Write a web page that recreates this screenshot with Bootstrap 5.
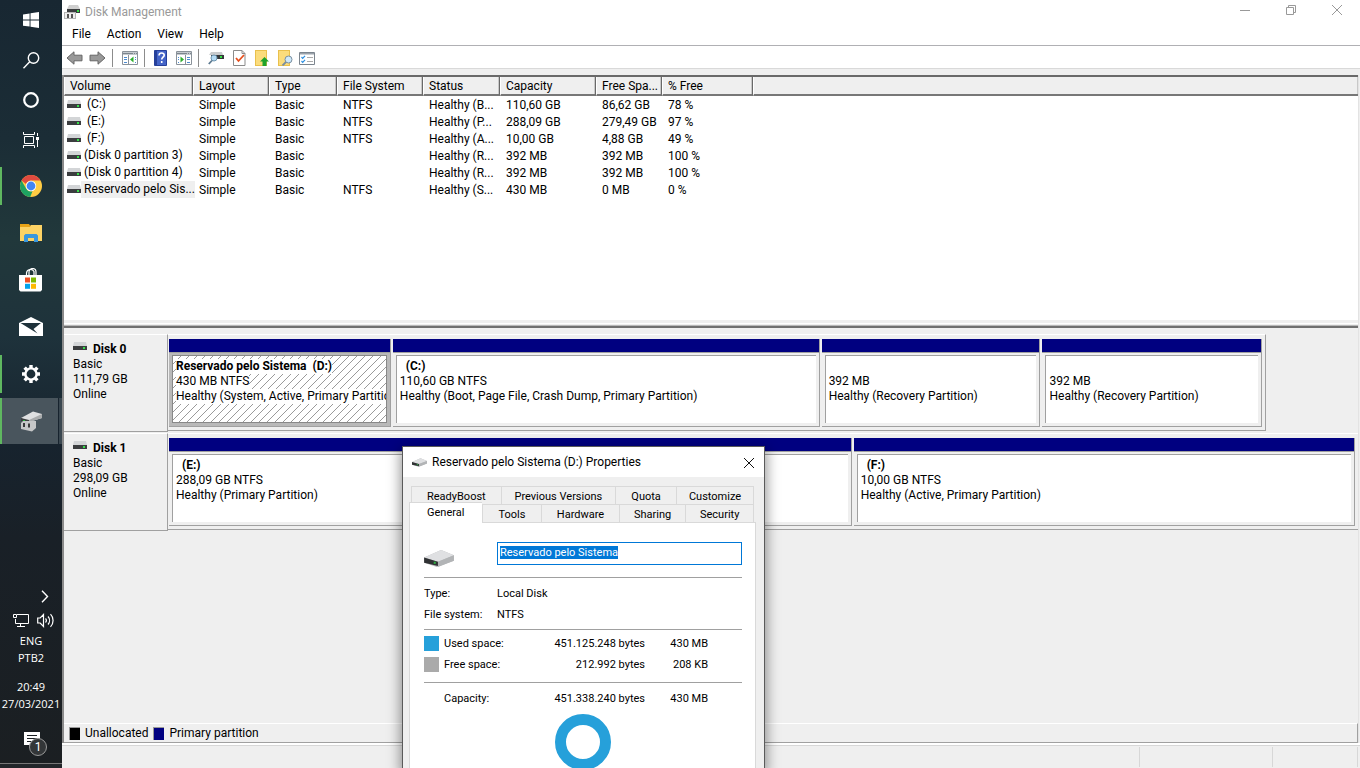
<!DOCTYPE html>
<html lang="en">
<head>
<meta charset="utf-8">
<meta name="viewport" content="width=device-width, initial-scale=1">
<title>Disk Management</title>
<link href="https://cdn.jsdelivr.net/npm/bootstrap@5.3.0/dist/css/bootstrap.min.css" rel="stylesheet">
<style>
  body { font: 12px/15px Roboto, "Liberation Sans", sans-serif; color: #000; background: #efefef; }
  button, input { font: inherit; color: inherit; }
  .plain-btn { border: 0; background: none; padding: 0; display: flex; align-items: center; justify-content: center; }
  svg { display: block; flex: none; }

  /* taskbar */
  .taskbar { width: 62px; flex: none; color: #fff; background: linear-gradient(#182732, #1b2d36 18%, #21383b 31%, #1e323b 44%, #17232e 58%, #192027 70%, #1b1f22); }
  .sys-btn { width: 62px; height: 40px; }
  .app-list { margin-top: 2px; }
  .task-btn { width: 62px; height: 47px; position: relative; }
  .task-btn.running::before { content: ""; position: absolute; left: 0; top: 5px; bottom: 4px; width: 2px; background: #5fb760; }
  .task-btn.current { background: linear-gradient(90deg, #49555d 58px, #17232e 58px 59px, #3a4750 59px); height: 46px; margin-top: 1px; }
  .task-btn.current::before { top: 0; bottom: 0; }
  .tray-more { padding-right: 13px; margin-bottom: 10px; }
  .lang-text { font: 11px/17px "Open Sans", "Noto Sans", sans-serif; }
  .notes { margin: 20px 0 13px; }
  .note-count { position: absolute; left: 29px; top: 6px; width: 18px; height: 18px; border: 1px solid #999; border-radius: 50%; background: #333638; line-height: 16px; text-align: center; }
  .show-desktop { height: 5px; border-top: 1px solid #777; background: #22262a; }

  /* main window */
  .title-row { height: 24px; color: #999; }
  .title-icon { margin: 0 5px 0 2px; }
  .win-ctl { width: 46px; height: 20px; }
  .menu-row { height: 21px; padding-left: 10px; }
  .tool-row { height: 24px; padding: 2px 0 0 4px; gap: 6px; border-top: 1px solid #b0b0b4; border-bottom: 1px solid #d9d9d9; }
  .tool-row .vr-line { width: 1px; height: 18px; background: #8c8c8c; }
  .tool-row .apart { margin-left: 3px; }
  .console { margin-top: 6px; border-left: 2px solid #8a8a8a; border-right: 1px solid #e3e3e3; margin-right: 1px; }
  .volume-pane { height: 253px; border-top: 2px solid #696969; border-bottom: 2px solid #707070; background: #fff; }
  .volume-list { table-layout: fixed; width: 100%; border-collapse: separate; border-spacing: 0; }
  .volume-list th { height: 19px; font-weight: 400; background: #efefef; border-right: 1px solid #696969; border-bottom: 2px solid #777; border-left: 1px solid #fff; padding: 2px 5px 0; box-shadow: inset -1px 0 #c8c8c8; white-space: nowrap; line-height: 15px; }
  .volume-list th:last-child { border-right: 0; }
  .volume-list td { height: 17px; padding: 1px 0 0 6px; line-height: 16px; white-space: nowrap; }
  .volume-list td:first-child { padding: 0 0 0 3px; line-height: 17px; }
  .volume-name { padding: 0 3px; }
  .volume-name.picked { background: #efefef; padding-right: 0; }
  .split-bar { height: 6px; background: #efefef; border-bottom: 1px solid #b8b8b8; box-shadow: inset 0 3px #efefef, inset 0 4px #fff; }

  .disk-area { padding-top: 6px; }
  .disk-row { height: 98px; margin-bottom: 1px; }
  .disk-label { width: 104px; flex: none; border-top: 1px solid #fff; border-right: 1px solid #a0a0a0; border-bottom: 1px solid #a0a0a0; padding: 7px 0 0 9px; }
  .disk-strip { border-top: 1px solid #fff; border-bottom: 1px solid #a0a0a0; border-right: 1px solid #a0a0a0; padding: 4px 1px 3px 1px; height: 97px; }
  .partition { min-width: 0; border-right: 1px solid #a0a0a0; border-bottom: 1px solid #a0a0a0; margin-right: 2px; display: flex; flex-direction: column; }
  .color-bar { height: 14px; background: #000080; border-bottom: 1px solid #a0a0a0; flex: none; }
  .part-box { flex: 1; margin: 2px 3px 3px; border-top: 1px solid #a0a0a0; border-left: 1px solid #a0a0a0; background: #fff; padding: 3px 0 0 3px; overflow: hidden; white-space: nowrap; }
  .part-box span { display: table; height: 15px; }
  .partition.chosen { background: #b9b9b9; }
  .partition.chosen .part-box { border: 1px solid #888; background: linear-gradient(135deg, #fff 47%, #9a9a9a 47% 53%, #fff 53%) 0 0 / 8px 8px; }
  .partition.chosen .part-box span { background: #fff; }

  .legend-row { height: 20px; padding-left: 5px; border-top: 1px solid #fff; border-bottom: 1px solid #a0a0a0; border-right: 1px solid #a0a0a0; gap: 5px; }
  .swatch { width: 11px; height: 13px; border: 1px solid #999; border-right: 0; border-bottom: 0; }
  .status-row { height: 25px; border-top: 2px solid #fff; box-shadow: inset 0 1px #d7d7d7; padding: 2px 2px 1px 0; }
  .status-row div { border-right: 1px solid #d7d7d7; }

  /* properties dialog lies over the main window */
  .props, .props-shade { position: absolute; left: 340px; top: 446px; bottom: 0; width: 363px; }
  .props { overflow: hidden; background: #efefef; border: 1px solid #5a5a5a; border-bottom: 0; }
  .props-shade { box-shadow: 0 5px 12px 2px rgba(0,0,0,.4); }
  .props-title { height: 30px; background: #fff; padding: 1px 9px 0; gap: 5px; }
  .tabs, .sheet { font-size: 11px; }
  .tabs { padding-top: 9px; }
  .tab-row { height: 18px; margin: 0 10px 0 8px; }
  .tab-row button { border: 1px solid #d9d9d9; border-bottom: 0; border-right: 0; background: #efefef; padding: 1px 0 0; text-align: center; }
  .tab-row button:last-child { border-right: 1px solid #d9d9d9; }
  .tab-row .front { background: #fff; margin: -2px 0 0 -2px; height: 21px; position: relative; padding-bottom: 2px; }
  .sheet { margin: 0 8px 0 6px; border: 1px solid #d9d9d9; background: #fff; padding: 19px 13px 0 14px; min-height: 246px; }
  .label-box { height: 23px; border: 1px solid #0078d7; border-radius: 0; padding: 0 2px 3px; outline: 0; background: #fff; }
  .label-box::selection { background: #0078d7; color: #fff; }
  .rule { height: 1px; background: #a0a0a0; margin: 7px 0 6px; }
  .rule.wide { margin: 10px 0 8px; }
  .line-stack { display: flex; flex-direction: column; gap: 6px; }
  .field-name { width: 73px; }
  .space-name { width: 73px; padding-left: 5px; }
  .bytes { width: 133px; text-align: right; }
  .short-size { width: 63px; text-align: right; }
  .key-box { width: 15px; height: 15px; }
</style>
</head>
<body class="overflow-hidden">
<svg width="0" height="0" class="position-absolute" aria-hidden="true">
  <symbol id="drive" viewBox="0 0 14 9" preserveAspectRatio="xMinYMin"><path d="M1 0h12l1 4H0z" fill="#d3d5d7"/><path d="M0 4h14v4H0z" fill="#3b3d3f"/><path d="M10 5h2v2h-2z" fill="#36e04a"/></symbol>
  <symbol id="block" viewBox="0 0 28 16"><path d="M0 7 16 0l12 5v5L12 16 0 12z" fill="#b9bbbd"/><path d="M0 7 16 0l12 5-15 6z" fill="#dfe0e2"/><path d="m13 11 15-6v5l-15 6z" fill="#b2b4b6"/><path d="m0 7 13 4v4L0 12z" fill="#303234"/><path d="M9 11h2v2H9z" fill="#2fae43"/></symbol>
</svg>
<div class="d-flex vh-100 position-relative">
  <aside class="taskbar d-flex flex-column">
    <button class="plain-btn sys-btn" aria-label="Start"><svg width="16" height="16" viewBox="0 0 16 16" fill="#fff"><path d="M0 2.400 6.600 1.400V7.500H0zM7.500 1.200 16 0v7.500H7.500zM0 8.500h6.600v6.100L0 13.700zM7.500 8.500H16V16l-8.500-1.200z"/></svg></button>
    <button class="plain-btn sys-btn" aria-label="Search"><svg width="17" height="17" viewBox="0 0 17 17" fill="none" stroke="#fff" stroke-width="1.400"><circle cx="10.500" cy="6" r="5.200"/><path d="M6.700 9.700.5 16.200"/></svg></button>
    <button class="plain-btn sys-btn" aria-label="Cortana"><svg width="16" height="16" viewBox="0 0 16 16" fill="none" stroke="#fff" stroke-width="2.200"><circle cx="8" cy="8" r="6.800"/></svg></button>
    <button class="plain-btn sys-btn" aria-label="Task view"><svg width="17" height="16" viewBox="0 0 17 16" fill="none" stroke="#fff"><path d="M1.500 4.500h9v7h-9zM.5 0v2.500h11V0M.5 16v-2.500h11V16M14.500 1v3M14.500 8v7"/><path d="M13 5h3v3h-3z" fill="#fff" stroke="none"/></svg></button>
    <div class="app-list">
    <button class="plain-btn task-btn running" aria-label="Chrome"><svg width="22" height="22" viewBox="0 0 22 22"><circle cx="11" cy="11" r="11" fill="#fc4"/><path d="M11 0a11 11 0 0 1 9.500 5.500H11a5.500 5.500 0 0 0-5 3.500L1.500 5.500A11 11 0 0 1 11 0z" fill="#e04a3f"/><path d="M1.500 5.500 6.200 13.700A5.500 5.500 0 0 0 12.500 16.300L10.200 22A11 11 0 0 1 1.500 5.500z" fill="#1ea362"/><circle cx="11" cy="11" r="5.200" fill="#fff"/><circle cx="11" cy="11" r="4.400" fill="#4285f4"/></svg></button>
    <button class="plain-btn task-btn" aria-label="File Explorer"><svg width="22" height="18" viewBox="0 0 22 18"><path d="M0 0h9l1 1.500h12V17H0z" fill="#e8a317"/><path d="M0 3h10l1-2h11v16H0z" fill="#fdd365"/><path d="M4 18v-6.500L5.500 10h11l1.500 1.500V18h-4v-4H8v4z" fill="#3a97dd"/></svg></button>
    <button class="plain-btn task-btn" aria-label="Microsoft Store"><svg width="24" height="24" viewBox="0 0 24 24"><path d="M7.500 7V5A4 4 0 0 1 15 3.500V7M10 7V4a3.500 3.500 0 0 1 7 0v3" fill="none" stroke="#fff" stroke-width="1.200"/><path d="M0 7h23v15l-1.500 1.500h-20L0 22z" fill="#fff"/><path d="M6 9.500h5v5H6z" fill="#f04f23"/><path d="M12 9.500h5v5h-5z" fill="#7db801"/><path d="M6 15.800h5v5H6z" fill="#02a3ec"/><path d="M12 15.800h5v5h-5z" fill="#fdb802"/></svg></button>
    <button class="plain-btn task-btn" aria-label="Mail"><svg width="24" height="20" viewBox="0 0 24 20"><path d="M0 6 12 0l12 6v13H0z" fill="#fff"/><path d="M1.500 6h20.500l-7.500 6 4 4.500z" fill="#1e313a"/></svg></button>
    <button class="plain-btn task-btn running" aria-label="Settings"><svg width="20" height="20" viewBox="-10 -10 20 20" stroke="#fff" fill="none"><circle r="5.600" stroke-width="2.400"/><path stroke-width="3.400" d="M0-6v-3M0 6v3M-6 0h-3M6 0h3M4.200-4.200l2.200-2.200M-4.200 4.200l-2.200 2.200M4.200 4.200l2.200 2.200M-4.200-4.200l-2.200-2.200"/></svg></button>
    <button class="plain-btn task-btn running current" aria-label="Disk Management"><svg width="22" height="21" viewBox="0 0 22 21"><path d="m1 7 12-6.500L22 3v4L9 11z" fill="#dfe0e1"/><path d="m1 7 8 2v2L1 10z" fill="#3c3f40"/><path d="m9 9 13-6v4L9 11z" fill="#a9abac"/><path d="M3 9h2v1H3z" fill="#2fae43"/><path d="m1 12 2-2h13v7l-4 3.500L1 18z" fill="#c6c7c8"/><path d="M3 12h2v4H3zM8 12.500h2v4H8z" fill="#3a3b3c"/></svg></button>
    </div>
    <div class="flex-fill"></div>
    <button class="plain-btn justify-content-end tray-more" aria-label="Show hidden icons"><svg width="9" height="13" viewBox="0 0 9 13" fill="none" stroke="#fff" stroke-width="1.400"><path d="m2 .8 5.500 5.700L2 12.200"/></svg></button>
    <div class="d-flex ps-2 ms-1 gap-2 mb-1">
      <svg width="17" height="15" viewBox="0 0 17 15" fill="none" stroke="#fff"><path d="M5 1.500h11.500v9H3.500V6M8.500 10.500v3M5 13.500h8M1.500 1.500h3v3h-3z"/></svg>
      <svg width="17" height="15" viewBox="0 0 17 15" fill="none" stroke="#fff" stroke-width="1.200"><path d="M.7 5h2.500L6.500 1.500v12L3.200 10H.7zM8.500 5.500a3 3 0 0 1 0 4M11 3.500a6 6 0 0 1 0 8M13.500 1.200a9 9 0 0 1 0 12.600"/></svg>
    </div>
    <div class="text-center lang-text">ENG<br>PTB2</div>
    <div class="text-center lang-text text-nowrap mt-2 pt-1">20:49<br>27/03/2021</div>
    <button class="plain-btn position-relative justify-content-start notes" aria-label="Notifications"><svg class="ms-4" width="16" height="18" viewBox="0 0 16 18"><path d="M0 0h16v13H8.500v4L5 13H0z" fill="#fff"/><path d="M3 3.500h10M3 6.500h10M3 9.500h7" stroke="#1b2024" stroke-width="1"/></svg><span class="note-count">1</span></button>
    <div class="show-desktop"></div>
  </aside>

  <main class="flex-fill d-flex flex-column position-relative overflow-hidden">
    <header class="bg-white">
      <div class="title-row d-flex align-items-center">
        <svg class="title-icon" width="16" height="15" viewBox="0 0 16 15"><path d="M5 0h9l2 4H3z" fill="#cfcfcf"/><path d="M3 4h13v4H3z" fill="#3b3d3f"/><path d="M13 5h2v2h-2z" fill="#3d4"/><path d="M0 7h12v7H0z" fill="#b4b4b4"/><path d="M1 8h10v5H1z" fill="#eee"/><path d="M3 9h2v4H3zM7 9h2v4H7z" fill="#555"/></svg>
        <span>Disk Management</span>
        <div class="ms-auto mb-1 d-flex">
          <button class="plain-btn win-ctl" aria-label="Minimize"><svg width="12" height="12" viewBox="0 0 12 12" stroke="#999"><path d="M1 6.500h10"/></svg></button>
          <button class="plain-btn win-ctl" aria-label="Restore"><svg width="12" height="12" viewBox="0 0 12 12" stroke="#999" fill="none"><path d="M1.500 3.500h7v7h-7zM3.500 3V1.500h7v7H9"/></svg></button>
          <button class="plain-btn win-ctl" aria-label="Close"><svg width="12" height="12" viewBox="0 0 12 12" stroke="#999"><path d="m1 1 10 10M11 1 1 11"/></svg></button>
        </div>
      </div>
      <nav class="menu-row d-flex align-items-center gap-3">
        <button class="plain-btn">File</button><button class="plain-btn">Action</button><button class="plain-btn">View</button><button class="plain-btn">Help</button>
      </nav>
      <div class="tool-row d-flex align-items-center">
        <button class="plain-btn" aria-label="Back"><svg width="17" height="14" viewBox="0 0 17 14"><path d="M1 7 8 .8v3.400h8v5.600H8v3.400z" fill="#999" stroke="#666"/></svg></button>
        <button class="plain-btn" aria-label="Forward"><svg width="17" height="14" viewBox="0 0 17 14"><path d="M16 7 9 .8v3.400H1v5.600h8v3.400z" fill="#999" stroke="#666"/></svg></button>
        <span class="vr-line"></span>
        <button class="plain-btn apart" aria-label="Show console tree"><svg width="16" height="14" viewBox="0 0 16 14"><path d="M.5.500h15v13H.5z" fill="#fff" stroke="#8a929a"/><path d="M1 1h14v3H1z" fill="#c3c9ce"/><path d="M1 2.500h10M12 2.500h1M14 2.500h1" stroke="#7c858e"/><path d="M6.500 4v9" stroke="#8a929a"/><path d="M2 6.500h3M2 8.500h3M2 11.500h3M13 6.500h1M13 8.500h1M13 11.500h1" stroke="#4c8bd0"/><path d="M11.500 5.500v6L8 8.500z" fill="#2fae2f"/></svg></button>
        <span class="vr-line"></span>
        <button class="plain-btn apart" aria-label="Help"><svg width="13" height="16" viewBox="0 0 13 16"><path d="M.5.500h12v15H.5z" fill="#4464c8" stroke="#26409a"/><path d="M1 1h2v14H1z" fill="#26409a"/><path d="M5 5.500C5 2 10.500 2.200 10.200 5.300 10 7 7.800 7.500 7.700 9.500M7.700 11v2" fill="none" stroke="#fff" stroke-width="1.600"/></svg></button>
        <button class="plain-btn apart" aria-label="Show action pane"><svg width="16" height="14" viewBox="0 0 16 14"><path d="M.5.500h15v13H.5z" fill="#fff" stroke="#8a929a"/><path d="M1 1h14v3H1z" fill="#c3c9ce"/><path d="M1 2.500h10M12 2.500h1M14 2.500h1" stroke="#7c858e"/><path d="M9.500 4v9" stroke="#8a929a"/><path d="M2 6.500h1M2 8.500h1M2 11.500h1M11 6.500h3M11 8.500h3M11 11.500h3" stroke="#4c8bd0"/><path d="M4.500 5.500v6L8 8.500z" fill="#2fae2f"/></svg></button>
        <span class="vr-line"></span>
        <button class="plain-btn apart" aria-label="Rescan disks"><svg width="16" height="14" viewBox="0 0 16 14"><path d="M3 1h11l1 3H1z" fill="#c9cbcd"/><path d="M3 4h13v4H3z" fill="#36383a"/><path d="M12 5h2v2h-2z" fill="#3d4"/><circle cx="6" cy="7" r="3" fill="#b5dcf5" stroke="#6e95b0"/><path d="M4 9.500.8 13" stroke="#5d7a90" stroke-width="1.800"/></svg></button>
        <button class="plain-btn apart" aria-label="Check"><svg width="13" height="16" viewBox="0 0 13 16"><path d="M.5.500h8.500l3 3v12H.5z" fill="#fff" stroke="#8b8b8b"/><path d="M9 .5v3h3" fill="none" stroke="#8b8b8b"/><path d="m3 8 2.500 3L11 5" fill="none" stroke="#e6501e" stroke-width="1.800"/></svg></button>
        <button class="plain-btn apart" aria-label="Up one level"><svg width="14" height="16" viewBox="0 0 14 16"><path d="M0 0h12v16H0z" fill="#e9c04c"/><path d="M1 1h10v14H1z" fill="#fbdc7c"/><path d="M9.500 7 14 11.500h-2.500V16h-4v-4.500H5z" fill="#1ea32a"/></svg></button>
        <button class="plain-btn apart" aria-label="Find"><svg width="15" height="16" viewBox="0 0 15 16"><path d="M0 0h12v16H0z" fill="#e9c04c"/><path d="M1 1h10v14H1z" fill="#fbdc7c"/><circle cx="10.500" cy="9.500" r="3.500" fill="#cfe9fa" stroke="#7a8fa0"/><path d="m8 12-3.500 3.500" stroke="#7a8fa0" stroke-width="1.800"/></svg></button>
        <button class="plain-btn" aria-label="Properties"><svg width="16" height="13" viewBox="0 0 16 13"><path d="M.5.500h15v12H.5z" fill="#fff" stroke="#7c858e"/><path d="M1 1h14v1.500H1z" fill="#9aa2aa"/><path d="m2.500 5 1.200 1.400L6 3.800M2.500 9l1.200 1.400L6 7.800" fill="none" stroke="#2a8ee0" stroke-width="1.200"/><path d="M8 5.500h6M8 9.500h6" stroke="#aaa"/></svg></button>
      </div>
    </header>

    <div class="console d-flex flex-column flex-fill">
      <section class="volume-pane d-flex flex-column">
        <table class="volume-list">
          <colgroup><col style="width:129px"><col style="width:76px"><col style="width:68px"><col style="width:86px"><col style="width:77px"><col style="width:96px"><col style="width:66px"><col style="width:91px"><col></colgroup>
          <thead><tr><th>Volume</th><th>Layout</th><th>Type</th><th>File System</th><th>Status</th><th>Capacity</th><th>Free Spa...</th><th>% Free</th><th></th></tr></thead>
          <tbody>
            <tr><td><div class="d-flex align-items-center"><svg width="14" height="9"><use href="#drive"/></svg><span class="volume-name">&nbsp;(C:)</span></div></td><td>Simple</td><td>Basic</td><td>NTFS</td><td>Healthy (B...</td><td>110,60 GB</td><td>86,62 GB</td><td>78 %</td><td></td></tr>
            <tr><td><div class="d-flex align-items-center"><svg width="14" height="9"><use href="#drive"/></svg><span class="volume-name">&nbsp;(E:)</span></div></td><td>Simple</td><td>Basic</td><td>NTFS</td><td>Healthy (P...</td><td>288,09 GB</td><td>279,49 GB</td><td>97 %</td><td></td></tr>
            <tr><td><div class="d-flex align-items-center"><svg width="14" height="9"><use href="#drive"/></svg><span class="volume-name">&nbsp;(F:)</span></div></td><td>Simple</td><td>Basic</td><td>NTFS</td><td>Healthy (A...</td><td>10,00 GB</td><td>4,88 GB</td><td>49 %</td><td></td></tr>
            <tr><td><div class="d-flex align-items-center"><svg width="14" height="9"><use href="#drive"/></svg><span class="volume-name">(Disk 0 partition 3)</span></div></td><td>Simple</td><td>Basic</td><td></td><td>Healthy (R...</td><td>392 MB</td><td>392 MB</td><td>100 %</td><td></td></tr>
            <tr><td><div class="d-flex align-items-center"><svg width="14" height="9"><use href="#drive"/></svg><span class="volume-name">(Disk 0 partition 4)</span></div></td><td>Simple</td><td>Basic</td><td></td><td>Healthy (R...</td><td>392 MB</td><td>392 MB</td><td>100 %</td><td></td></tr>
            <tr><td><div class="d-flex align-items-center"><svg width="14" height="9"><use href="#drive"/></svg><span class="volume-name picked">Reservado pelo Sis...</span></div></td><td>Simple</td><td>Basic</td><td>NTFS</td><td>Healthy (S...</td><td>430 MB</td><td>0 MB</td><td>0 %</td><td></td></tr>
          </tbody>
        </table>
        <div class="split-bar mt-auto"></div>
      </section>

      <section class="disk-area flex-fill">
        <div class="disk-row d-flex">
          <div class="disk-label"><div class="d-flex gap-1"><svg width="16" height="9"><use href="#drive"/></svg><b>Disk 0</b></div>Basic<br>111,79 GB<br>Online</div>
          <div class="flex-fill"><div class="disk-strip d-flex" style="width:92.3%">
            <div class="partition chosen" style="flex:222 0 0"><div class="color-bar"></div><div class="part-box"><span><b>Reservado pelo Sistema&nbsp; (D:)</b></span><span>430 MB NTFS</span><span>Healthy (System, Active, Primary Partition)</span></div></div>
            <div class="partition" style="flex:428 0 0"><div class="color-bar"></div><div class="part-box"><span><b>&nbsp; (C:)</b></span><span>110,60 GB NTFS</span><span>Healthy (Boot, Page File, Crash Dump, Primary Partition)</span></div></div>
            <div class="partition" style="flex:219 0 0"><div class="color-bar"></div><div class="part-box"><span></span><span>392 MB</span><span>Healthy (Recovery Partition)</span></div></div>
            <div class="partition" style="flex:220 0 0"><div class="color-bar"></div><div class="part-box"><span></span><span>392 MB</span><span>Healthy (Recovery Partition)</span></div></div>
          </div></div>
        </div>
        <div class="disk-row d-flex">
          <div class="disk-label"><div class="d-flex gap-1"><svg width="16" height="9"><use href="#drive"/></svg><b>Disk 1</b></div>Basic<br>298,09 GB<br>Online</div>
          <div class="flex-fill"><div class="disk-strip d-flex border-end-0">
            <div class="partition" style="flex:684 0 0"><div class="color-bar"></div><div class="part-box"><span><b>&nbsp; (E:)</b></span><span>288,09 GB NTFS</span><span>Healthy (Primary Partition)</span></div></div>
            <div class="partition" style="flex:502 0 0"><div class="color-bar"></div><div class="part-box"><span><b>&nbsp; (F:)</b></span><span>10,00 GB NTFS</span><span>Healthy (Active, Primary Partition)</span></div></div>
          </div></div>
        </div>
      </section>

      <footer class="legend-row d-flex align-items-center">
        <span class="swatch bg-black"></span><span>Unallocated</span>
        <span class="swatch" style="background:#000080"></span><span>Primary partition</span>
      </footer>
    </div>
    <div class="status-row d-flex"><div class="flex-fill"></div><div style="width:133px"></div><div style="width:85px"></div></div>

    <div class="props-shade"></div>
    <div class="props" role="dialog" aria-label="Properties">
      <div class="props-title d-flex align-items-center">
        <svg width="15" height="9"><use href="#block"/></svg><span>Reservado pelo Sistema (D:) Properties</span>
        <button class="plain-btn ms-auto" aria-label="Close"><svg width="12" height="12" viewBox="0 0 12 12" stroke="#111"><path d="m1 1 10 10M11 1 1 11"/></svg></button>
      </div>
      <div class="tabs">
        <div class="tab-row d-flex" role="tablist">
          <button role="tab" style="flex:90">ReadyBoost</button><button role="tab" style="flex:115">Previous Versions</button><button role="tab" style="flex:61">Quota</button><button role="tab" style="flex:77">Customize</button>
        </div>
        <div class="tab-row d-flex" role="tablist">
          <button role="tab" class="front" style="flex:73">General</button><button role="tab" style="flex:60">Tools</button><button role="tab" style="flex:78">Hardware</button><button role="tab" style="flex:67">Sharing</button><button role="tab" style="flex:68">Security</button>
        </div>
      </div>
      <div class="sheet">
        <div class="d-flex">
          <label for="vol" class="field-name" aria-label="Volume label"><svg class="mt-2" width="30" height="17"><use href="#block"/></svg></label>
          <input id="vol" class="label-box flex-fill" value="Reservado pelo Sistema" style="width:0">
        </div>
        <div class="rule wide"></div>
        <div class="line-stack">
          <div class="d-flex"><span class="field-name">Type:</span><span>Local Disk</span></div>
          <div class="d-flex"><span class="field-name">File system:</span><span>NTFS</span></div>
        </div>
        <div class="rule"></div>
        <div class="line-stack">
          <div class="d-flex"><span class="key-box" style="background:#26a0da"></span><span class="space-name">Used space:</span><span class="bytes">451.125.248 bytes</span><span class="short-size">430 MB</span></div>
          <div class="d-flex"><span class="key-box" style="background:#aaa"></span><span class="space-name">Free space:</span><span class="bytes">212.992 bytes</span><span class="short-size">208 KB</span></div>
        </div>
        <div class="rule wide"></div>
        <div class="d-flex"><span class="key-box"></span><span class="space-name">Capacity:</span><span class="bytes">451.338.240 bytes</span><span class="short-size">430 MB</span></div>
        <svg class="mx-auto mt-2" width="56" height="56" viewBox="0 0 56 56"><circle cx="28" cy="28" r="22.500" fill="none" stroke="#26a0da" stroke-width="11"/></svg>
      </div>
    </div>
  </main>
</div>
<script src="https://cdn.jsdelivr.net/npm/bootstrap@5.3.0/dist/js/bootstrap.bundle.min.js"></script>
<script>
  const volumeLabel = document.getElementById('vol');
  volumeLabel.focus();
  volumeLabel.select();
</script>
</body>
</html>
